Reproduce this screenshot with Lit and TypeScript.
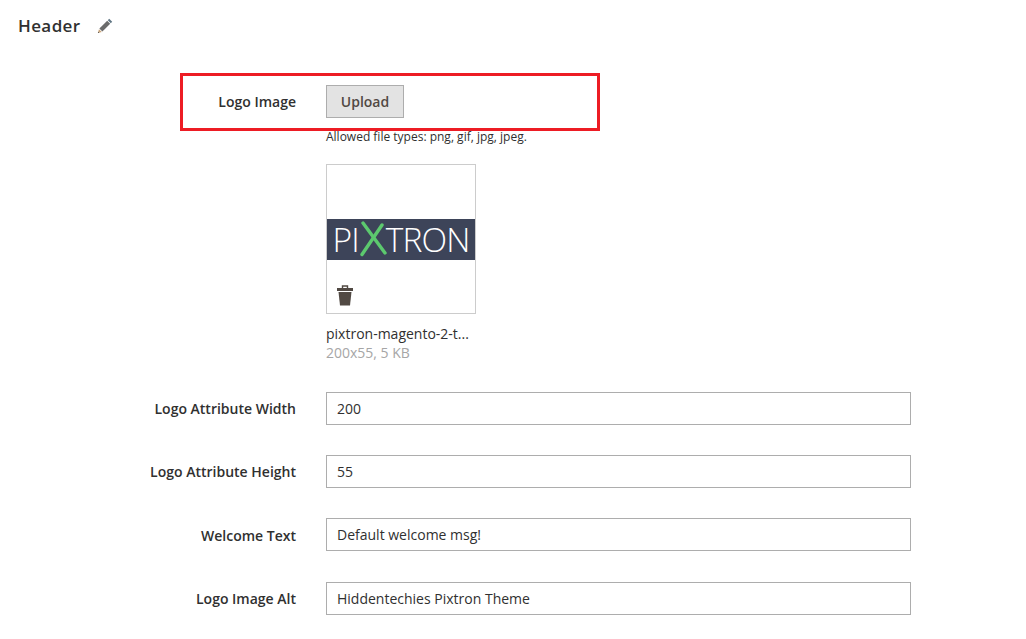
import { LitElement, html, css } from "lit";
import { customElement } from "lit/decorators.js";

@customElement("app-root")
export class AppRoot extends LitElement {
  static styles = css`
    :host { display: block; width: 1026px; height: 639px; overflow: hidden; position: relative; background: #fff;
      font-family: "Open Sans", sans-serif; color: #303030; }
    .head { display: flex; align-items: center; height: 26px; padding: 13px 0 0 18px; gap: 16px; }
    .title { font-size: 17px; font-weight: 600; letter-spacing: 0.4px; color: #303030; line-height: 26px; }
    .form { padding-top: 46px; display: flex; flex-direction: column; }
    .row { display: grid; grid-template-columns: 296px 585px; column-gap: 30px; align-items: center; }
    .label { text-align: right; font-size: 14px; font-weight: 600; color: #303030; line-height: 20px; }
    .field .label { padding-top: 2px; }
    .upload { width: 78px; height: 33px; box-sizing: border-box; background: #e3e3e3; border: 1px solid #adadad;
      font-size: 14px; font-weight: 600; color: #514943; display: flex; align-items: center; justify-content: center; }
    .hint { margin: 11px 0 0 326px; font-size: 12px; line-height: 16px; color: #303030; }
    .preview { margin: 19px 0 0 326px; width: 150px; height: 150px; box-sizing: border-box; border: 1px solid #ccc;
      position: relative; display: flex; align-items: center; }
    .logo { width: 148px; height: 41px; background: #3d4459; color: #fff; font-size: 33.5px; font-weight: 300;
      line-height: 41px; display: flex; justify-content: center; letter-spacing: -0.9px; }
    .logo svg { width: 27px; height: 41px; flex: none; margin: 0 -1px 0 1px; }
    .trash { position: absolute; left: 10px; bottom: 7px; width: 16px; height: 21px; display: block; }
    .name { margin: 11px 0 0 326px; font-size: 14px; line-height: 18px; color: #303030; }
    .meta { margin: 1px 0 0 326px; font-size: 14px; line-height: 18px; color: #a6a6a6; }
    .fields { margin-top: 29.7px; display: flex; flex-direction: column; }
    .field { height: 33px; margin-bottom: 30.3px; }
    .input { height: 33px; width: 585px; box-sizing: border-box; border: 1px solid #adadad; padding: 0 10px;
      font-size: 14px; line-height: 31px; color: #303030; background: #fff; }
    .mark { position: absolute; left: 180px; top: 73px; width: 420px; height: 58px; box-sizing: border-box; border: 3px solid #ed1c24; pointer-events: none; }
    .pencil { width: 16px; height: 16px; display: block; }
  `;

  private field(label: string, value: string) {
    return html`<div class="row field"><div class="label">${label}</div><div class="input">${value}</div></div>`;
  }

  render() {
    return html`
      <div class="head">
        <div class="title">Header</div>
        <svg class="pencil" viewBox="0 0 16 16">
          <path d="M12.2 0.8 15.2 3.8 13.8 5.2 10.8 2.2Z" fill="#5f7583"/>
          <path d="M10.2 2.8 13.2 5.8 5.4 13.6 2.4 10.6Z" fill="#6b6b6b"/>
          <path d="M2 11.2 4.8 14 0.9 15.1Z" fill="#c9a57a"/>
          <path d="M0.9 15.1 1.3 13.7 2.3 14.7Z" fill="#444"/>
        </svg>
      </div>
      <div class="form">
        <div class="row">
          <div class="label">Logo Image</div>
          <div class="upload">Upload</div>
        </div>
        <div class="hint">Allowed file types: png, gif, jpg, jpeg.</div>
        <div class="preview">
          <div class="logo">
            <span>PI</span>
            <svg viewBox="0 0 27 41"><path d="M2 35.5 22 6" stroke="#5cc96e" stroke-width="3.4" stroke-linecap="round"/><path d="M3 4 25 34" stroke="#5cc96e" stroke-width="3.4" stroke-linecap="round"/></svg>
            <span>TRON</span>
          </div>
          <svg class="trash" viewBox="0 0 16 21">
            <path d="M5.5 3V1h5v2" fill="none" stroke="#514943" stroke-width="1.4"/>
            <path d="M0 3h16v3H0Z" fill="#514943"/>
            <path d="M1.5 7h13L13 20.5H3Z" fill="#514943"/>
          </svg>
        </div>
        <div class="name">pixtron-magento-2-t...</div>
        <div class="meta">200x55, 5 KB</div>
        <div class="fields">
          ${this.field("Logo Attribute Width", "200")}
          ${this.field("Logo Attribute Height", "55")}
          ${this.field("Welcome Text", "Default welcome msg!")}
          ${this.field("Logo Image Alt", "Hiddentechies Pixtron Theme")}
        </div>
      </div>
      <div class="mark"></div>
    `;
  }
}
